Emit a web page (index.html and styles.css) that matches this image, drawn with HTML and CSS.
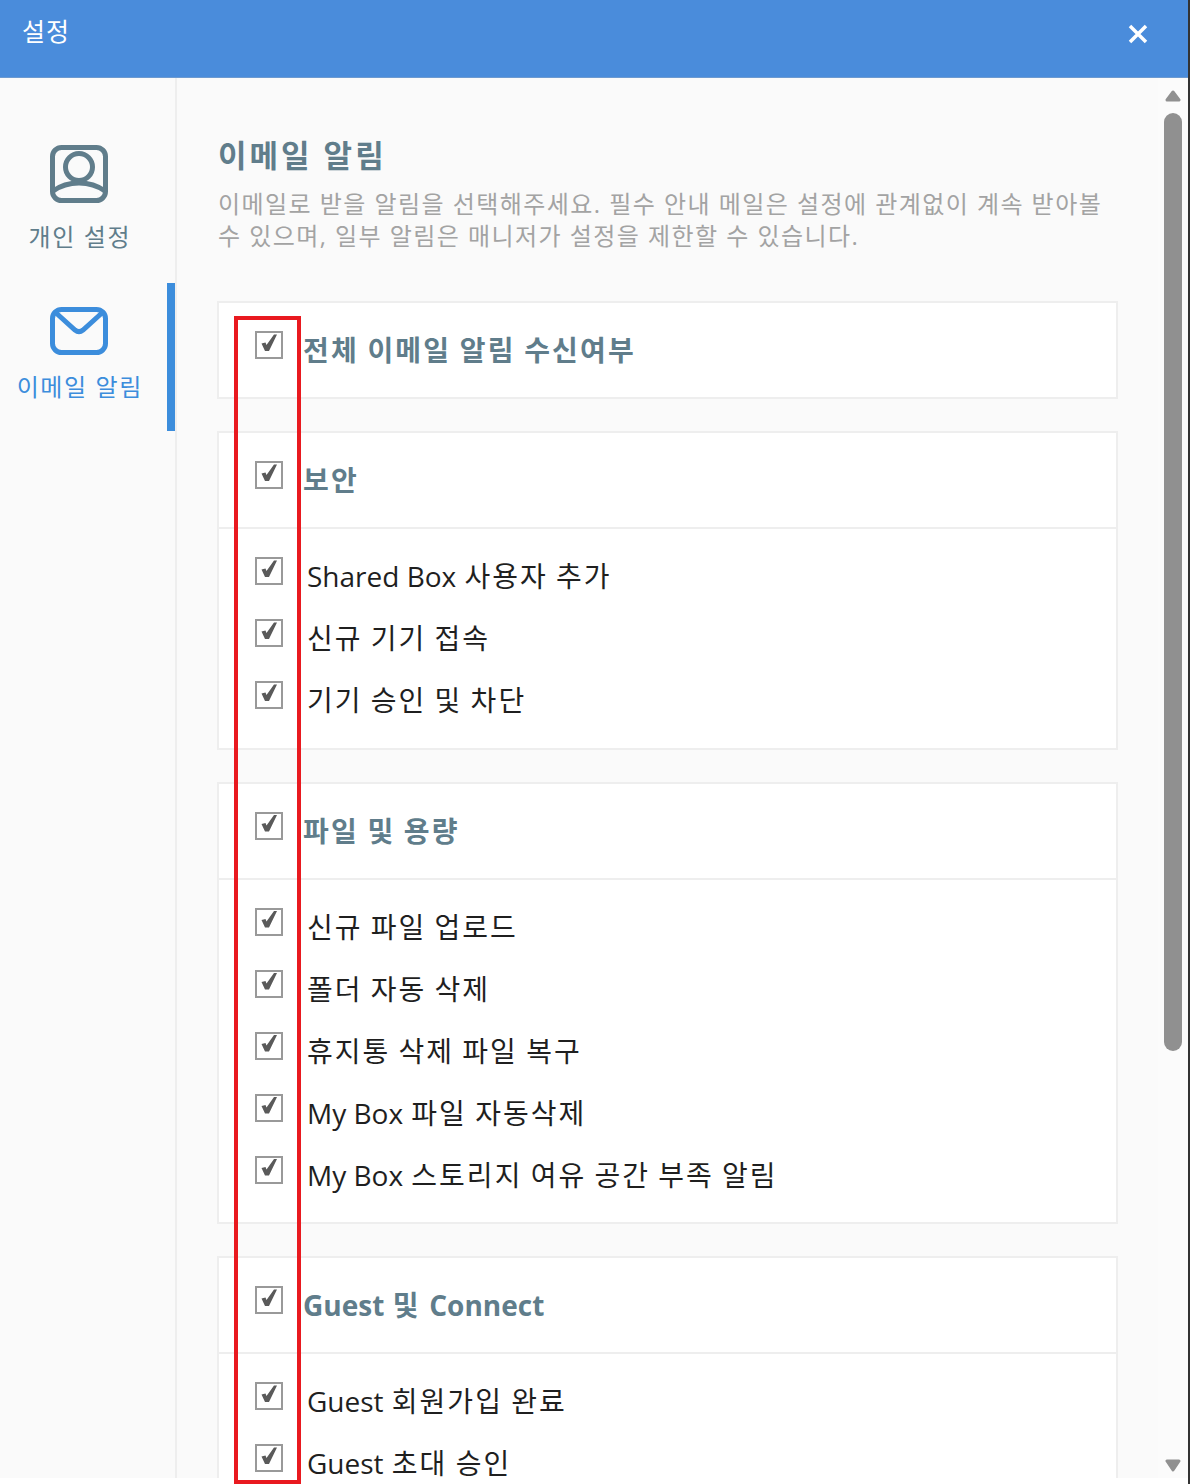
FILE: index.html
```html
<!DOCTYPE html>
<html lang="ko">
<head>
<meta charset="utf-8">
<title>설정</title>
<link rel="stylesheet" href="styles.css">
</head>
<body>
<div class="dialog">
  <header class="topbar">
    <h1 class="topbar-title">설정</h1>
    <svg class="close" viewBox="0 0 20 20" width="20" height="20"><path d="M2 2 18 18M18 2 2 18" stroke="#fff" stroke-width="3.500" fill="none"/></svg>
  </header>
  <div class="main">
    <nav class="side">
      <a class="side-item">
        <svg width="60" height="60" viewBox="0 0 60 60" fill="none" stroke="#607d8b" stroke-width="5"><rect x="3.500" y="3.500" width="53" height="53" rx="9"/><circle cx="30" cy="23" r="13.500"/><path d="M4 47c7-5 16-8 26-8s19 3 26 8"/></svg>
        <span>개인 설정</span>
      </a>
      <a class="side-item active">
        <svg width="60" height="50" viewBox="0 0 60 50" fill="none" stroke="#3c8ddc" stroke-width="5"><rect x="3.500" y="2.500" width="53" height="43" rx="9"/><path d="M6 5 26 23c2.500 2 5.500 2 8 0L54 5"/></svg>
        <span>이메일 알림</span>
      </a>
    </nav>
    <section class="content">
      <h2 class="title">이메일 알림</h2>
      <p class="desc">이메일로 받을 알림을 선택해주세요. 필수 안내 메일은 설정에 관계없이 계속 받아볼 수 있으며, 일부 알림은 매니저가 설정을 제한할 수 있습니다.</p>
      <div class="card">
        <div class="card-head"><i class="check"></i><span class="label">전체 이메일 알림 수신여부</span></div>
      </div>
      <div class="card">
        <div class="card-head"><i class="check"></i><span class="label">보안</span></div>
        <ul class="list">
          <li><i class="check"></i><span class="label"><span class="lat">Shared Box</span> 사용자 추가</span></li>
          <li><i class="check"></i><span class="label">신규 기기 접속</span></li>
          <li><i class="check"></i><span class="label">기기 승인 및 차단</span></li>
        </ul>
      </div>
      <div class="card">
        <div class="card-head"><i class="check"></i><span class="label">파일 및 용량</span></div>
        <ul class="list">
          <li><i class="check"></i><span class="label">신규 파일 업로드</span></li>
          <li><i class="check"></i><span class="label">폴더 자동 삭제</span></li>
          <li><i class="check"></i><span class="label">휴지통 삭제 파일 복구</span></li>
          <li><i class="check"></i><span class="label"><span class="lat">My Box</span> 파일 자동삭제</span></li>
          <li><i class="check"></i><span class="label"><span class="lat">My Box</span> 스토리지 여유 공간 부족 알림</span></li>
        </ul>
      </div>
      <div class="card">
        <div class="card-head"><i class="check"></i><span class="label"><span class="lat">Guest</span> 및 <span class="lat">Connect</span></span></div>
        <ul class="list">
          <li><i class="check"></i><span class="label"><span class="lat">Guest</span> 회원가입 완료</span></li>
          <li><i class="check"></i><span class="label"><span class="lat">Guest</span> 초대 승인</span></li>
        </ul>
      </div>
    </section>
    <div class="scrollbar">
      <svg class="arrow" width="16" height="12" viewBox="0 0 16 12"><path d="M8 2 14 10H2Z" fill="#909090" stroke="#909090" stroke-width="3" stroke-linejoin="round"/></svg>
      <div class="track"><div class="thumb"></div></div>
      <svg class="arrow" width="16" height="13" viewBox="0 0 16 13"><path d="M2 2H14L8 11Z" fill="#909090" stroke="#909090" stroke-width="3" stroke-linejoin="round"/></svg>
    </div>
  </div>
  <div class="highlight"></div>
</div>
</body>
</html>
```
FILE: styles.css
```css
* { box-sizing: border-box; }
html, body { margin: 0; padding: 0; height: 100%; overflow: hidden; background: #fff; }
body { font-family: "Open Sans", "Noto Sans CJK KR", sans-serif; }
.dialog { position: relative; height: 1484px; width: 1190px; display: flex; flex-direction: column; border-right: 2px solid #333; overflow: hidden; }
.topbar { flex: 0 0 78px; background: #4a8cdb; border-bottom: 1px solid #6d9ad0; display: flex; justify-content: space-between; padding: 0 40px 0 22px; }
.topbar-title { margin: 15px 0 0; font-size: 25px; line-height: 32px; font-weight: 400; color: #fff; letter-spacing: 1px; }
.close { margin-top: 24px; }
.main { flex: 0 0 1400px; display: flex; background: #fafafa; overflow: hidden; }
.side { flex: 0 0 177px; border-right: 2px solid #eee; padding-top: 53px; }
.side-item { position: relative; display: flex; flex-direction: column; align-items: center; width: 175px; padding-right: 17px; color: #607d8b; font-size: 24px; line-height: 32px; letter-spacing: 1.600px; height: 152px; gap: 17px; padding-top: 13px; }
.side-item span { padding-left: 1.600px; }
.side-item.active { color: #3c8ddc; height: 148px; padding-top: 24px; gap: 14px; }
.side-item.active::after { content: ""; position: absolute; right: 0; top: 0; bottom: 0; width: 8px; background: #3c8ddc; }
.content { flex: 1; min-width: 0; padding: 54px 40px 0 40px; }
.title { margin: 0 0 0 1px; font-size: 31px; line-height: 46px; font-weight: 700; color: #607d8b; letter-spacing: 3px; }
.desc { margin: 10px 0 0 1px; font-size: 24px; line-height: 32px; color: #a3a3a3; width: 899px; height: 113px; letter-spacing: 1.440px; }
.card { width: 901px; background: #fff; border: 2px solid #eee; margin-bottom: 32px; }
.card-head { height: 94px; display: flex; align-items: flex-start; padding: 28px 0 0 36px; color: #607d8b; font-size: 28px; font-weight: 700; }
.label { line-height: 38px; letter-spacing: 2px; word-spacing: -1px; }
.card-head .label { margin-left: 20px; letter-spacing: 2.200px; }
.lat, .card-head .lat { letter-spacing: 0; word-spacing: 0; }
.check { display: block; flex: none; width: 28px; height: 28px; border: 2px solid #999; position: relative; }
.check::after { content: ""; position: absolute; inset: -2px; background: #5a5a5a; clip-path: polygon(6.500px 12.500px, 10.500px 11.500px, 11.500px 14px, 19px 3.500px, 22px 3.500px, 14px 20px, 10px 20px); }
.list { list-style: none; margin: 0; padding: 16px 0 16.500px 36px; border-top: 2px solid #eee; }
.list li { height: 62px; display: flex; align-items: flex-start; padding-top: 12px; font-size: 28px; color: #1f1f1f; }
.list .label { margin-left: 24px; }
.scrollbar { flex: 0 0 30px; margin-top: -1px; background: #fbfbfb; display: flex; flex-direction: column; align-items: center; padding: 13px 0 0 0; height: 1401px; }
.track { height: 1357px; padding-top: 11px; width: 18px; flex: none; }
.thumb { height: 938px; background: #909090; border-radius: 9px; }
.arrow { flex: none; display: block; }
.highlight { position: absolute; left: 234px; top: 316px; width: 67px; height: 1168px; border: 4px solid #e9191f; }
```
